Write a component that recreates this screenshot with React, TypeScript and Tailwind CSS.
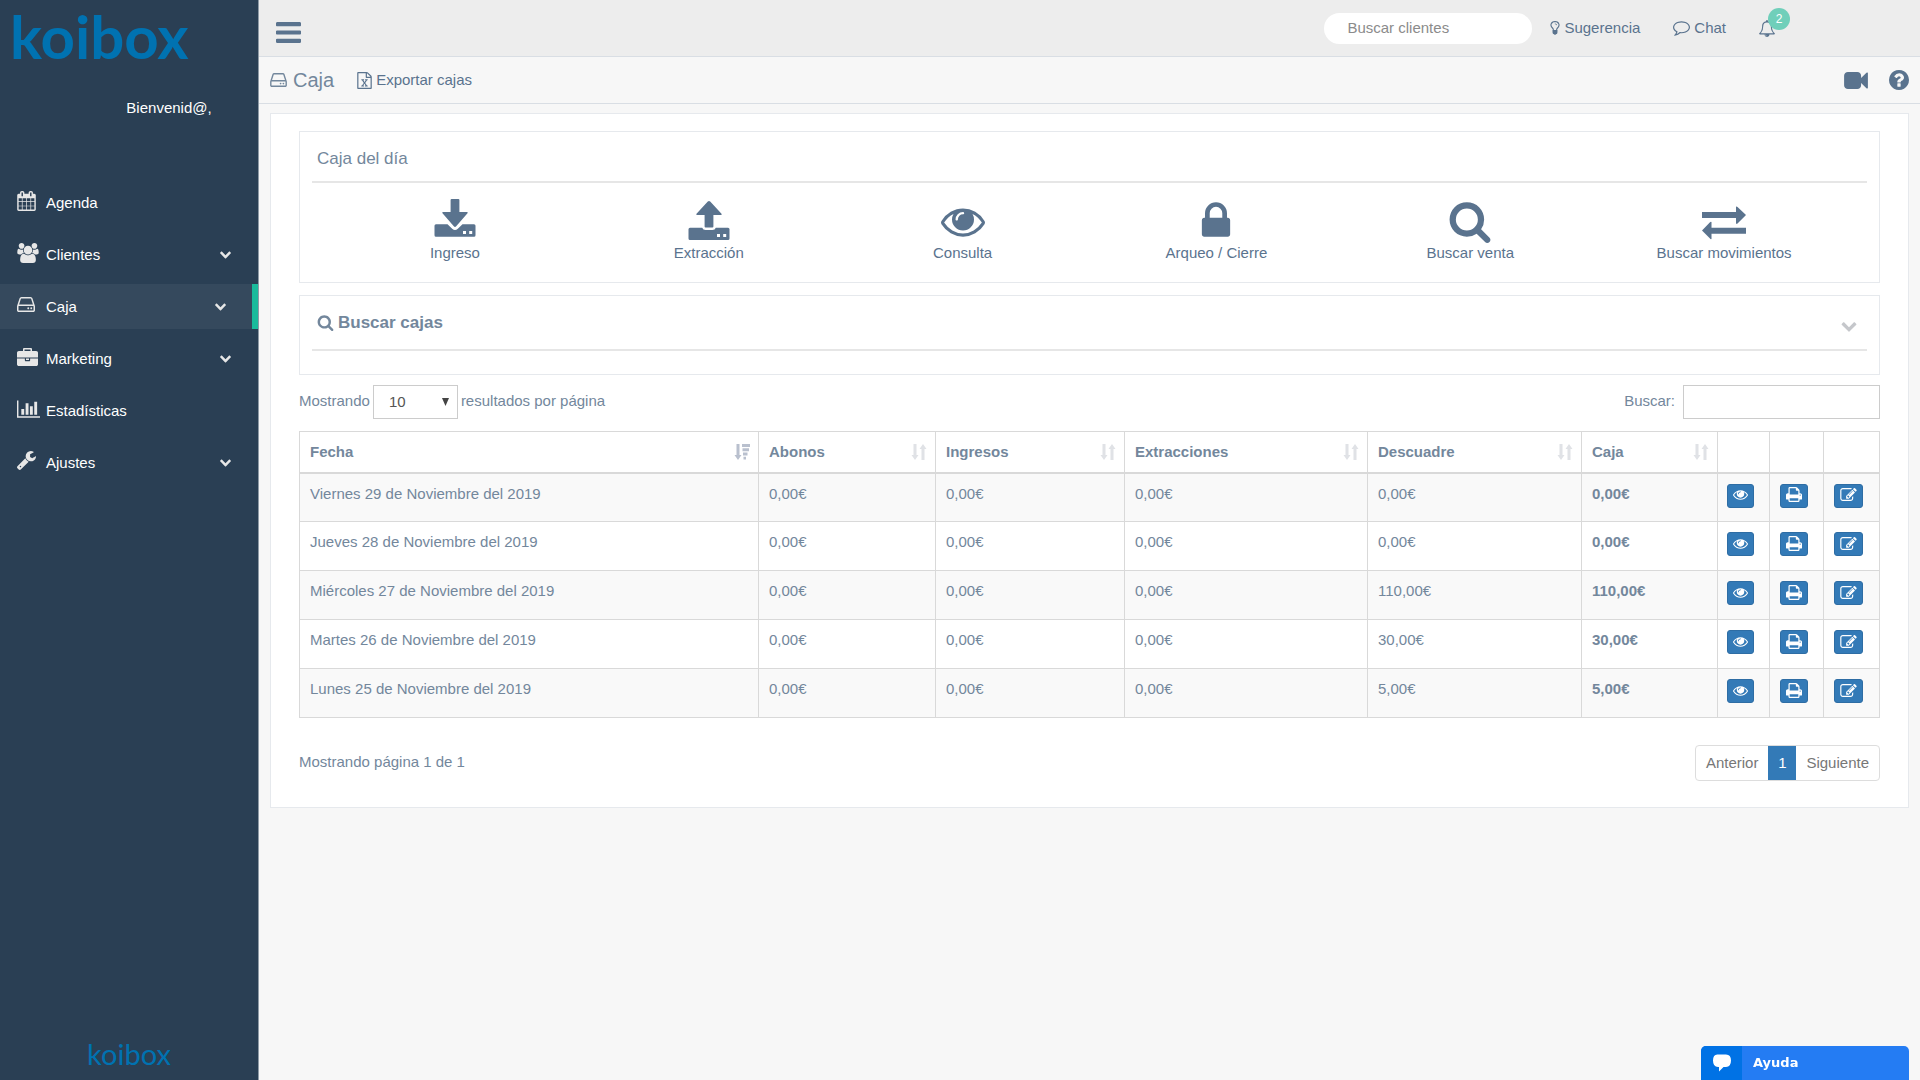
import { useState } from "react";
import type { ReactNode } from "react";

type IconProps = { name: keyof typeof icons; className?: string };

const icons = {
  bars: {
    box: "128 256 1536 1280",
    d: "M1664 1344v128q0 26-19 45t-45 19h-1408q-26 0-45-19t-19-45v-128q0-26 19-45t45-19h1408q26 0 45 19t19 45zm0-512v128q0 26-19 45t-45 19h-1408q-26 0-45-19t-19-45v-128q0-26 19-45t45-19h1408q26 0 45 19t19 45zm0-512v128q0 26-19 45t-45 19h-1408q-26 0-45-19t-19-45v-128q0-26 19-45t45-19h1408q26 0 45 19t19 45z",
  },
  chevron: {
    box: "90 512 1612 1080",
    d: "M1683 808l-742 741q-19 19-45 19t-45-19l-742-741q-19-19-19-45.5t19-45.5l166-165q19-19 45-19t45 19l531 531 531-531q19-19 45-19t45 19l166 165q19 19 19 45.5t-19 45.5z",
  },
  search: {
    box: "0 0 1792 1792",
    d: "M1216 832q0-185-131.5-316.5t-316.5-131.5-316.5 131.5-131.5 316.5 131.5 316.5 316.5 131.5 316.5-131.5 131.5-316.5zm512 832q0 52-38 90t-90 38q-54 0-90-38l-343-342q-179 124-399 124-143 0-273.5-55.5t-225-150-150-225-55.5-273.5 55.5-273.5 150-225 225-150 273.5-55.5 273.5 55.5 225 150 150 225 55.5 273.5q0 220-124 399l343 343q37 37 37 90z",
  },
  lock: {
    box: "0 0 1792 1792",
    d: "M640 768h512v-192q0-106-75-181t-181-75-181 75-75 181v192zm832 96v576q0 40-28 68t-68 28h-960q-40 0-68-28t-28-68v-576q0-40 28-68t68-28h32v-192q0-184 132-316t316-132 316 132 132 316v192h32q40 0 68 28t28 68z",
  },
  eye: {
    box: "0 0 1792 1792",
    d: "M1664 960q-152-236-381-353 61 104 61 225 0 185-131.5 316.5t-316.5 131.5-316.5-131.5-131.5-316.5q0-121 61-225-229 117-381 353 133 205 333.5 326.5t434.5 121.5 434.5-121.5 333.5-326.5zm-720-384q0-20-14-34t-34-14q-125 0-214.5 89.5t-89.5 214.5q0 20 14 34t34 14 34-14 14-34q0-86 61-147t147-61q20 0 34-14t14-34zm848 384q0 34-20 69-140 230-376.5 368.5t-499.5 138.5-499.5-139-376.5-368q-20-35-20-69t20-69q140-229 376.5-368t499.5-139 499.5 139 376.5 368q20 35 20 69z",
  },
  briefcase: {
    box: "0 0 1792 1536",
    d: "M640 256h512v-128h-512v128zm1152 640v480q0 66-47 113t-113 47h-1472q-66 0-113-47t-47-113v-480h672v160q0 26 19 45t45 19h320q26 0 45-19t19-45v-160h672zm-768 0v128h-256v-128h256zm768-480v384h-1792v-384q0-66 47-113t113-47h352v-160q0-40 28-68t68-28h576q40 0 68 28t28 68v160h352q66 0 113 47t47 113z",
  },
  calendar: {
    box: "64 0 1664 1792",
    d: "M192 1664h288v-288h-288v288zm352 0h320v-288h-320v288zm-352-352h288v-320h-288v320zm352 0h320v-320h-320v320zm-352-384h288v-288h-288v288zm736 736h320v-288h-320v288zm-384-736h320v-288h-320v288zm768 736h288v-288h-288v288zm-384-352h320v-320h-320v320zm-352-864v-288q0-13-9.5-22.5t-22.5-9.5h-64q-13 0-22.5 9.5t-9.5 22.5v288q0 13 9.5 22.5t22.5 9.5h64q13 0 22.5-9.5t9.5-22.5zm736 864h288v-320h-288v320zm-384-384h320v-288h-320v288zm384 0h288v-288h-288v288zm32-480v-288q0-13-9.5-22.5t-22.5-9.5h-64q-13 0-22.5 9.5t-9.5 22.5v288q0 13 9.5 22.5t22.5 9.5h64q13 0 22.5-9.5t9.5-22.5zm384-64v1280q0 52-38 90t-90 38h-1408q-52 0-90-38t-38-90v-1280q0-52 38-90t90-38h128v-96q0-66 47-113t113-47h64q66 0 113 47t47 113v96h384v-96q0-66 47-113t113-47h64q66 0 113 47t47 113v96h128q52 0 90 38t38 90z",
  },
  users: {
    box: "0 0 1920 1792",
    d: "M593 896q-162 5-265 128h-134q-82 0-138-40.5t-56-118.5q0-353 124-353 6 0 43.5 21t97.5 42.5 119 21.5q67 0 133-23-5 37-5 66 0 139 81 256zm1071 637q0 120-73 189.5t-194 69.5h-874q-121 0-194-69.5t-73-189.5q0-53 3.5-103.5t14-109 26.5-108.5 43-97.5 62-81 85.5-53.5 111.5-20q10 0 43 21.5t73 48 107 48 135 21.5 135-21.5 107-48 73-48 43-21.5q61 0 111.5 20t85.5 53.5 62 81 43 97.5 26.5 108.5 14 109 3.5 103.5zm-1024-1277q0 106-75 181t-181 75-181-75-75-181 75-181 181-75 181 75 75 181zm704 384q0 159-112.5 271.5t-271.5 112.5-271.5-112.5-112.5-271.5 112.5-271.5 271.5-112.5 271.5 112.5 112.5 271.5zm576 225q0 78-56 118.5t-138 40.5h-134q-103-123-265-128 81-117 81-256 0-29-5-66 66 23 133 23 59 0 119-21.5t97.5-42.5 43.5-21q124 0 124 353zm-128-609q0 106-75 181t-181 75-181-75-75-181 75-181 181-75 181 75 75 181z",
  },
  wrench: {
    box: "85 128 1641 1643",
    d: "M448 1472q0-26-19-45t-45-19-45 19-19 45 19 45 45 19 45-19 19-45zm644-420l-682 682q-37 37-90 37-52 0-91-37l-106-108q-38-36-38-90 0-53 38-91l681-681q39 98 114.5 173.5t173.5 114.5zm634-435q0 39-23 106-47 134-164.5 217.5t-258.5 83.5q-185 0-316.5-131.5t-131.5-316.5 131.5-316.5 316.5-131.5q58 0 121.5 16.5t107.5 46.5q16 11 16 28t-16 28l-293 169v224l193 107q5-3 79-48.5t135.5-81 70.5-35.5q15 0 23.5 10t8.5 25z",
  },
  chart: {
    box: "0 128 2048 1536",
    d: "M640 896v512h-256v-512h256zm384-512v1024h-256v-1024h256zm1024 1152v128h-2048v-1536h128v1408h1920zm-640-896v768h-256v-768h256zm384-384v1152h-256v-1152h256z",
  },
  hdd: {
    box: "128 256 1536 1280",
    d: "M1168 1216q0 33-23.5 56.5t-56.5 23.5-56.5-23.5-23.5-56.5 23.5-56.5 56.5-23.5 56.5 23.5 23.5 56.5zm256 0q0 33-23.5 56.5t-56.5 23.5-56.5-23.5-23.5-56.5 23.5-56.5 56.5-23.5 56.5 23.5 23.5 56.5zm112 160v-320q0-13-9.5-22.5t-22.5-9.5h-1216q-13 0-22.5 9.5t-9.5 22.5v320q0 13 9.5 22.5t22.5 9.5h1216q13 0 22.5-9.5t9.5-22.5zm-1230-480h1180l-157-482q-4-13-16-21.5t-26-8.5h-782q-14 0-26 8.5t-16 21.5zm1358 160v320q0 66-47 113t-113 47h-1216q-66 0-113-47t-47-113v-320q0-25 16-75l197-606q17-53 63-86t101-33h782q55 0 101 33t63 86l197 606q16 50 16 75z",
  },
  print: {
    box: "64 128 1664 1536",
    d: "M448 1536h896v-256h-896v256zm0-640h896v-384h-160q-40 0-68-28t-28-68v-160h-640v640zm1152 64q0-26-19-45t-45-19-45 19-19 45 19 45 45 19 45-19 19-45zm128 0v416q0 13-9.5 22.5t-22.5 9.5h-224v160q0 40-28 68t-68 28h-960q-40 0-68-28t-28-68v-160h-224q-13 0-22.5-9.5t-9.5-22.5v-416q0-79 56.5-135.5t135.5-56.5h64v-544q0-40 28-68t68-28h672q40 0 88 20t76 48l152 152q28 28 48 76t20 88v256h64q79 0 135.5 56.5t56.5 135.5z",
  },
  edit: {
    box: "0 128 1792 1408",
    d: "M888 1184l116-116-152-152-116 116v56h96v96h56zm440-720q-16-16-33 1l-350 350q-17 17-1 33t33-1l350-350q17-17 1-33zm80 594v190q0 119-84.5 203.5t-203.5 84.5h-832q-119 0-203.5-84.5t-84.5-203.5v-832q0-119 84.5-203.5t203.5-84.5h832q63 0 117 25 15 7 18 23 3 17-9 29l-49 49q-14 14-32 8-23-6-45-6h-832q-66 0-113 47t-47 113v832q0 66 47 113t113 47h832q66 0 113-47t47-113v-126q0-13 9-22l64-64q15-15 35-7t20 29zm-96-738l288 288-672 672h-288v-288zm444 132l-92 92-288-288 92-92q28-28 68-28t68 28l152 152q28 28 28 68t-28 68z",
  },
  question: {
    box: "128 128 1536 1536",
    d: "M1024 1376v-192q0-14-9-23t-23-9h-192q-14 0-23 9t-9 23v192q0 14 9 23t23 9h192q14 0 23-9t9-23zm256-672q0-88-55.5-163t-138.5-116-170-41q-243 0-371 213-15 24 8 42l132 100q7 6 19 6 16 0 25-12 53-68 86-92 34-24 86-24 48 0 85.5 26t37.5 59q0 38-20 61t-68 45q-63 28-115.5 86.5t-52.5 125.5v36q0 14 9 23t23 9h192q14 0 23-9t9-23q0-19 21.5-49.5t54.5-49.5q32-18 49-28.5t46-35 44.5-48 28-60.5 12.5-81zm384 192q0 209-103 385.5t-279.5 279.5-385.5 103-385.5-103-279.5-279.5-103-385.5 103-385.5 279.5-279.5 385.5-103 385.5 103 279.5 279.5 103 385.5z",
  },
  video: {
    box: "0 256 1792 1280",
    d: "M1792 352v1088q0 42-39 59-13 5-25 5-27 0-45-19l-403-403v166q0 119-84.5 203.5t-203.5 84.5h-704q-119 0-203.5-84.5t-84.5-203.5v-704q0-119 84.5-203.5t203.5-84.5h704q119 0 203.5 84.5t84.5 203.5v165l403-402q18-19 45-19 12 0 25 5 39 17 39 59z",
  },
  bell: {
    box: "64 0 1664 1792",
    d: "M912 1696q0-16-16-16-59 0-101.5-42.5t-42.5-101.5q0-16-16-16t-16 16q0 73 51.5 124.5t124.5 51.5q16 0 16-16zm-666-288h1300q-266-300-266-832 0-51-24-105t-69-103-121.5-80.5-169.5-31.5-169.5 31.5-121.5 80.5-69 103-24 105q0 532-266 832zm1482 0q0 52-38 90t-90 38h-448q0 106-75 181t-181 75-181-75-75-181h-448q-52 0-90-38t-38-90q50-42 91-88t85-119.5 74.5-158.5 50-206 19.5-260q0-152 117-282.5t307-158.5q-8-19-8-39 0-40 28-68t68-28 68 28 28 68q0 20-8 39 190 28 307 158.5t117 282.5q0 139 19.5 260t50 206 74.5 158.5 85 119.5 91 88z",
  },
  comment: {
    box: "0 256 1792 1536",
    d: "M896 384q-204 0-381.5 69.5t-282 187.5-104.5 255q0 112 71.5 213.5t201.5 175.5l87 50-27 96q-24 91-70 172 152-63 275-171l43-38 57 6q69 8 130 8 204 0 381.5-69.5t282-187.5 104.5-255-104.5-255-282-187.5-381.5-69.5zm896 512q0 174-120 321.5t-326 233-450 85.5q-70 0-145-8-198 175-460 242-49 14-114 22h-5q-15 0-27-10.5t-16-27.5v-1q-3-4-.5-12t2-10 4.5-9.5l6-9 7-8.5 8-9q7-8 31-34.5t34.5-38 31-39.5 32.5-51 27-59 26-76q-157-89-247.5-220t-90.5-281q0-130 71-248.5t191-204.5 286-136.5 348-50.5 348 50.5 286 136.5 191 204.5 71 248.5z",
  },
  bulb: {
    box: "384 128 1024 1664",
    d: "M1120 576q0 13-9.5 22.5t-22.5 9.5-22.5-9.5-9.5-22.5q0-46-54-71t-106-25q-13 0-22.5-9.5t-9.5-22.5 9.5-22.5 22.5-9.5q50 0 99.5 16t87 54 37.5 90zm160 0q0-72-34.5-134t-90-101.5-123-62-136.5-22.5-136.5 22.5-123 62-90 101.5-34.5 134q0 101 68 180 10 11 30.5 33t30.5 33q128 153 141 298h228q13-145 141-298 10-11 30.5-33t30.5-33q68-79 68-180zm128 0q0 155-103 268-45 49-74.5 87t-59.5 95.5-34 107.5q47 28 47 82 0 37-25 64 25 27 25 64 0 52-45 81 13 23 13 47 0 46-31.5 71t-77.5 25q-20 44-60 70t-87 26-87-26-60-70q-46 0-77.5-25t-31.5-71q0-24 13-47-45-29-45-81 0-37 25-64-25-27-25-64 0-54 47-82-4-50-34-107.5t-59.5-95.5-74.5-87q-103-113-103-268 0-99 44.5-184.5t117-142 164-89 186.5-32.5 186.5 32.5 164 89 117 142 44.5 184.5z",
  },
  excel: {
    box: "128 0 1536 1792",
    d: "M1596 380q28 28 48 76t20 88v1152q0 40-28 68t-68 28h-1344q-40 0-68-28t-28-68v-1600q0-40 28-68t68-28h896q40 0 88 20t76 48zm-444-244v376h376q-10-29-22-41l-313-313q-12-12-41-22zm384 1528v-1024h-416q-40 0-68-28t-28-68v-416h-768v1536h1280zm-979-234v106h281v-106h-75l103-161q5-7 10-16.5t7.5-13.5 3.5-4h2q1 4 5 10 2 4 4.5 7.5t6 8 6.5 8.5l107 161h-76v106h291v-106h-68l-192-273 195-282h67v-107h-279v107h74l-103 159q-4 7-10 16.5t-9 13.500l-2 3h-2q-1-4-5-10-6-11-17-23l-106-159h76v-107h-290v107h68l189 272-194 283h-68z",
  },
  save: {
    box: "0 0 44 44",
    d: "M18.6 0h6.800q1 0 1 1v12h7.500q1.400 0 .6 1.200L23.200 27.200q-1.200 1.400-2.400 0L9.500 14.200q-.8-1.200.6-1.200h7.500v-12q0-1 1-1zM3 25.300h11.500l4.700 4.500q2.800 2.400 5.600 0l4.700-4.500h11.500q1.500 0 1.500 1.500v9.400q0 1.500-1.500 1.500h-38q-1.500 0-1.500-1.500v-9.400q0-1.500 1.500-1.500zM30 32v3h3v-3zM36.200 32v3h3v-3z",
  },
  open: {
    box: "0 0 44 44",
    d: "M23.200 2.600L34.500 14.800q.8 1.200-.6 1.200h-7.500v11.500q0 1-1 1h-6.800q-1 0-1-1v-11.500h-7.500q-1.400 0-.6-1.200L20.800 2.600q1.200-1.200 2.400 0zM3 28.700h12.200q.8 2.300 3.400 2.300h6.800q2.600 0 3.400-2.300h12.200q1.500 0 1.500 1.500v9.300q0 1.500-1.500 1.500h-38q-1.500 0-1.500-1.500v-9.300q0-1.500 1.500-1.500zM30 35v3h3v-3zM36.200 35v3h3v-3z",
  },
  transfer: {
    box: "0 0 44 44",
    d: "M0 13h34v-5.300q.8-.4 1.500.4l8.500 8-8.500 8.300q-.7.700-1.500.3v-5.700h-34zM44 34.700h-34.500v5.300q-.8.400-1.500-.4l-8-8 8-8.300q.7-.7 1.500-.3v5.700h34.500z",
  },
  sort: {
    box: "0 0 16 16",
    d: "M2.500 0h3v11h2l-3.500 5-3.500-5h2zM10.500 16v-11h-2l3.500-5 3.500 5h-2v11z",
  },
  sortDesc: {
    box: "0 0 16 16",
    d: "M2.500 0h3v11h2l-3.500 5-3.500-5h2zM8 0h8v3h-8zM8.500 4.300h6.500v3h-6.500zM9 8.600h4.500v3h-4.500zM9.500 12.800h2.500v2.700h-2.500z",
  },
  bubble: {
    box: "0 0 18 18",
    d: "M5 0.500h8q5 0 5 6t-5 6.500h-2.500l-4.500 4.500v-4.500h-1q-5 0-5-6.500t5-6z",
  },
};

function Icon({ name, className = "" }: IconProps) {
  return (
    <svg
      viewBox={icons[name].box}
      className={`shrink-0 ${className}`}
      fill="currentColor"
      aria-hidden="true"
    >
      <path fillRule={name === "save" || name === "open" ? "evenodd" : "nonzero"} d={icons[name].d} />
    </svg>
  );
}

const menu: { icon: keyof typeof icons; size: string; label: string; sub?: boolean; active?: boolean }[] = [
  { icon: "calendar", size: "w-[19px] h-5", label: "Agenda" },
  { icon: "users", size: "w-[22px] h-5", label: "Clientes", sub: true },
  { icon: "hdd", size: "w-[18px] h-[15px]", label: "Caja", sub: true, active: true },
  { icon: "briefcase", size: "w-[21px] h-[18px]", label: "Marketing", sub: true },
  { icon: "chart", size: "w-[23px] h-[18px]", label: "Estadísticas" },
  { icon: "wrench", size: "w-[19px] h-[19px]", label: "Ajustes", sub: true },
];

const actions: { icon: keyof typeof icons; label: string }[] = [
  { icon: "save", label: "Ingreso" },
  { icon: "open", label: "Extracción" },
  { icon: "eye", label: "Consulta" },
  { icon: "lock", label: "Arqueo / Cierre" },
  { icon: "search", label: "Buscar venta" },
  { icon: "transfer", label: "Buscar movimientos" },
];

const columns = [
  { label: "Fecha", width: "" },
  { label: "Abonos", width: "w-[177px]" },
  { label: "Ingresos", width: "w-[189px]" },
  { label: "Extracciones", width: "w-[243px]" },
  { label: "Descuadre", width: "w-[214px]" },
  { label: "Caja", width: "w-[136px]" },
];

const rows = [
  ["Viernes 29 de Noviembre del 2019", "0,00€", "0,00€", "0,00€", "0,00€", "0,00€"],
  ["Jueves 28 de Noviembre del 2019", "0,00€", "0,00€", "0,00€", "0,00€", "0,00€"],
  ["Miércoles 27 de Noviembre del 2019", "0,00€", "0,00€", "0,00€", "110,00€", "110,00€"],
  ["Martes 26 de Noviembre del 2019", "0,00€", "0,00€", "0,00€", "30,00€", "30,00€"],
  ["Lunes 25 de Noviembre del 2019", "0,00€", "0,00€", "0,00€", "5,00€", "5,00€"],
];

function Sidebar() {
  return (
    <aside className="w-[259px] shrink-0 flex flex-col bg-[#2a3f54] border-r border-[#8f9ba6] text-[#e7e7e7]">
      <a
        href="#"
        className="h-[72px] pl-2.5 font-['Lato',sans-serif] font-bold text-[60px] leading-[72px] text-[#0072b1]"
      >
        koibox
      </a>
      <p className="mt-[26px] pl-20 text-center leading-5 text-white">Bienvenid@,</p>
      <nav className="mt-[62px] flex flex-col gap-[7px]">
        {menu.map((item) => (
          <a
            key={item.label}
            href="#"
            className={`h-[45px] flex items-center pl-[17px] ${
              item.active ? "bg-[#35495d] border-r-6 border-[#1abb9c] pr-[26px]" : "pr-[27px]"
            }`}
          >
            <span className="w-[29px] pb-1">
              <Icon name={item.icon} className={item.size} />
            </span>
            <span className="grow text-white">{item.label}</span>
            {item.sub && <Icon name="chevron" className="w-[11px] h-2" />}
          </a>
        ))}
      </nav>
      <p className="mt-auto pb-1.5 text-center font-['Lato',sans-serif] text-[29px] leading-10 text-[#0072b1]">
        koibox
      </p>
    </aside>
  );
}

function TopBar() {
  return (
    <header className="h-[57px] flex items-center justify-between bg-[#ededed] border-b border-[#d9dee4] pl-[17px] pr-[145px] text-[#5a738e]">
      <button type="button" aria-label="Menú" className="pt-2">
        <Icon name="bars" className="w-[25px] h-[21px]" />
      </button>
      <div className="flex items-center">
        <input
          type="search"
          aria-label="Buscar clientes"
          placeholder="Buscar clientes"
          className="w-[208px] h-[31px] rounded-full bg-white px-[23px] pb-0.5 placeholder-[#8b8b8b] focus:outline-none"
        />
        <a href="#" className="ml-[18px] flex items-center gap-1">
          <Icon name="bulb" className="w-2.5 h-[15px]" />
          Sugerencia
        </a>
        <a href="#" className="ml-[33px] flex items-center gap-1">
          <Icon name="comment" className="w-[17px] h-[15px]" />
          Chat
        </a>
        <a href="#" aria-label="Notificaciones" className="relative ml-[33px]">
          <Icon name="bell" className="w-4 h-[17px]" />
          <span className="absolute -top-3 left-[9px] size-[22px] rounded-full bg-[#70cfba] text-center text-xs leading-[22px] text-white">
            2
          </span>
        </a>
      </div>
    </header>
  );
}

function Panel({ title, children, bold }: { title: ReactNode; children?: ReactNode; bold?: boolean }) {
  return (
    <section className="border border-[#e6e9ed] px-3">
      <h2
        className={`flex items-center gap-1 border-b-2 border-[#e6e6e6] pl-[5px] text-[17px] ${
          bold ? "h-[55px] font-bold" : "h-[51px] pt-1"
        }`}
      >
        {title}
      </h2>
      {children}
    </section>
  );
}

function RowButton({ icon, label, size }: { icon: keyof typeof icons; label: string; size: string }) {
  return (
    <button
      type="button"
      aria-label={label}
      className="h-6 px-[5px] pb-0.5 flex items-center rounded-[3px] border border-[#2e6da4] bg-[#337ab7] text-white hover:bg-[#286090]"
    >
      <Icon name={icon} className={size} />
    </button>
  );
}

function CajasTable({ filter }: { filter: string }) {
  const visible = rows.filter((row) => row.join(" ").toLowerCase().includes(filter.toLowerCase()));

  return (
    <table className="mt-3 w-full table-fixed border-collapse text-left">
      <thead>
        <tr className="h-[41px]">
          {columns.map((col, i) => (
            <th
              key={col.label}
              className={`${col.width} border border-b-2 border-[#d9d9d9] pl-2.5 pr-2 font-bold`}
            >
              <span className="flex items-center justify-between">
                {col.label}
                <Icon
                  name={i === 0 ? "sortDesc" : "sort"}
                  className={`size-4 ${i === 0 ? "text-[#b9c0ce]" : "text-[#e0e2e6]"}`}
                />
              </span>
            </th>
          ))}
          <th aria-label="Ver" className="w-[52px] border border-b-2 border-[#d9d9d9]" />
          <th aria-label="Imprimir" className="w-[54px] border border-b-2 border-[#d9d9d9]" />
          <th aria-label="Editar" className="w-[56px] border border-b-2 border-[#d9d9d9]" />
        </tr>
      </thead>
      <tbody>
        {visible.map((row) => (
          <tr key={row[0]} className="h-[49px] align-top odd:bg-[#f9f9f9]">
            {row.map((cell, i) => (
              <td
                key={i}
                className={`border border-[#d9d9d9] px-2.5 py-2.5 ${i === 5 ? "font-bold" : ""}`}
              >
                {cell}
              </td>
            ))}
            <td className="border border-[#d9d9d9] pl-[9px] pt-2.5">
              <RowButton icon="eye" label="Ver" size="size-[15px]" />
            </td>
            <td className="border border-[#d9d9d9] pl-2.5 pt-2.5">
              <RowButton icon="print" label="Imprimir" size="w-4 h-[15px]" />
            </td>
            <td className="border border-[#d9d9d9] pl-2.5 pt-2.5">
              <RowButton icon="edit" label="Editar" size="w-[17px] h-[13px]" />
            </td>
          </tr>
        ))}
      </tbody>
    </table>
  );
}

export default function App() {
  const [filter, setFilter] = useState("");

  return (
    <div className="min-h-screen flex bg-[#f7f7f7] font-['Liberation_Sans',Arial,sans-serif] text-[15px] leading-5 text-[#73879c]">
      <Sidebar />

      <div className="grow min-w-0">
        <TopBar />

        <div className="h-[47px] flex items-center border-b border-[#d9dee4] pl-[11px] pr-[11px] text-[#5a738e]">
          <h1 className="flex items-center gap-1.5 text-xl text-[#73879c]">
            <Icon name="hdd" className="w-[17px] h-[14px]" />
            Caja
          </h1>
          <a href="#" className="ml-[23px] flex items-center gap-1">
            <Icon name="excel" className="w-[15px] h-[17px]" />
            Exportar cajas
          </a>
          <button type="button" aria-label="Vídeo" className="ml-auto">
            <Icon name="video" className="w-6 h-[17px]" />
          </button>
          <button type="button" aria-label="Ayuda" className="ml-[21px]">
            <Icon name="question" className="size-5" />
          </button>
        </div>

        <main className="mt-[9px] mx-[11px] border border-[#e6e9ed] bg-white px-7 pt-[17px] pb-[26px]">
          <Panel title="Caja del día">
            <div className="grid grid-cols-6 px-4 pt-4 pb-[19px] text-[#5a738e]">
              {actions.map((action) => (
                <a key={action.label} href="#" className="flex flex-col items-center">
                  <Icon name={action.icon} className="size-11" />
                  {action.label}
                </a>
              ))}
            </div>
          </Panel>

          <div className="mt-3">
            <Panel
              bold
              title={
                <>
                  <Icon name="search" className="size-[17px]" />
                  Buscar cajas
                  <button type="button" aria-label="Desplegar" className="ml-auto mr-2.5 pt-2 text-[#c5c7cb]">
                    <Icon name="chevron" className="w-4 h-2.5" />
                  </button>
                </>
              }
            >
              <div className="h-[23px]" />
            </Panel>
          </div>

          <div className="mt-2.5 flex justify-between">
            <label className="flex items-center gap-[3px]">
              <span className="pb-0.5">Mostrando</span>
              <span className="relative">
                <select className="w-[85px] h-[34px] appearance-none border border-[#ccc] bg-white pl-[15px] text-[#555]">
                  <option>10</option>
                  <option>25</option>
                  <option>50</option>
                </select>
                <svg viewBox="0 0 7 8" className="absolute right-[9px] top-[13px] w-[7px] h-2 pointer-events-none" fill="#444">
                  <path d="M0 0h7l-3.500 8z" />
                </svg>
              </span>
              <span className="pb-0.5">resultados por página</span>
            </label>
            <label className="flex items-center gap-2">
              <span className="pb-0.5">Buscar:</span>
              <input
                type="text"
                value={filter}
                onChange={(e) => setFilter(e.target.value)}
                className="w-[197px] h-[34px] border border-[#ccc] bg-white px-2.5 focus:outline-none"
              />
            </label>
          </div>

          <CajasTable filter={filter} />

          <div className="mt-[27px] flex justify-between">
            <p className="pt-[7px]">Mostrando página 1 de 1</p>
            <div className="h-9 flex overflow-hidden rounded-sm border border-[#ddd] text-[#777]">
              <button type="button" className="px-2.5">
                Anterior
              </button>
              <button type="button" className="w-7 bg-[#337ab7] text-white">
                1
              </button>
              <button type="button" className="px-2.5">
                Siguiente
              </button>
            </div>
          </div>
        </main>
      </div>

      <button
        type="button"
        className="fixed bottom-0 right-[11px] w-[208px] h-[34px] flex overflow-hidden rounded-t-[5px] bg-[#247cf3] font-['DejaVu_Sans',sans-serif] text-[13px] font-bold text-white"
      >
        <span className="w-[41px] h-full flex items-center justify-center bg-[#0072e5]">
          <Icon name="bubble" className="size-[18px]" />
        </span>
        <span className="pl-[11px] leading-[34px]">Ayuda</span>
      </button>
    </div>
  );
}
